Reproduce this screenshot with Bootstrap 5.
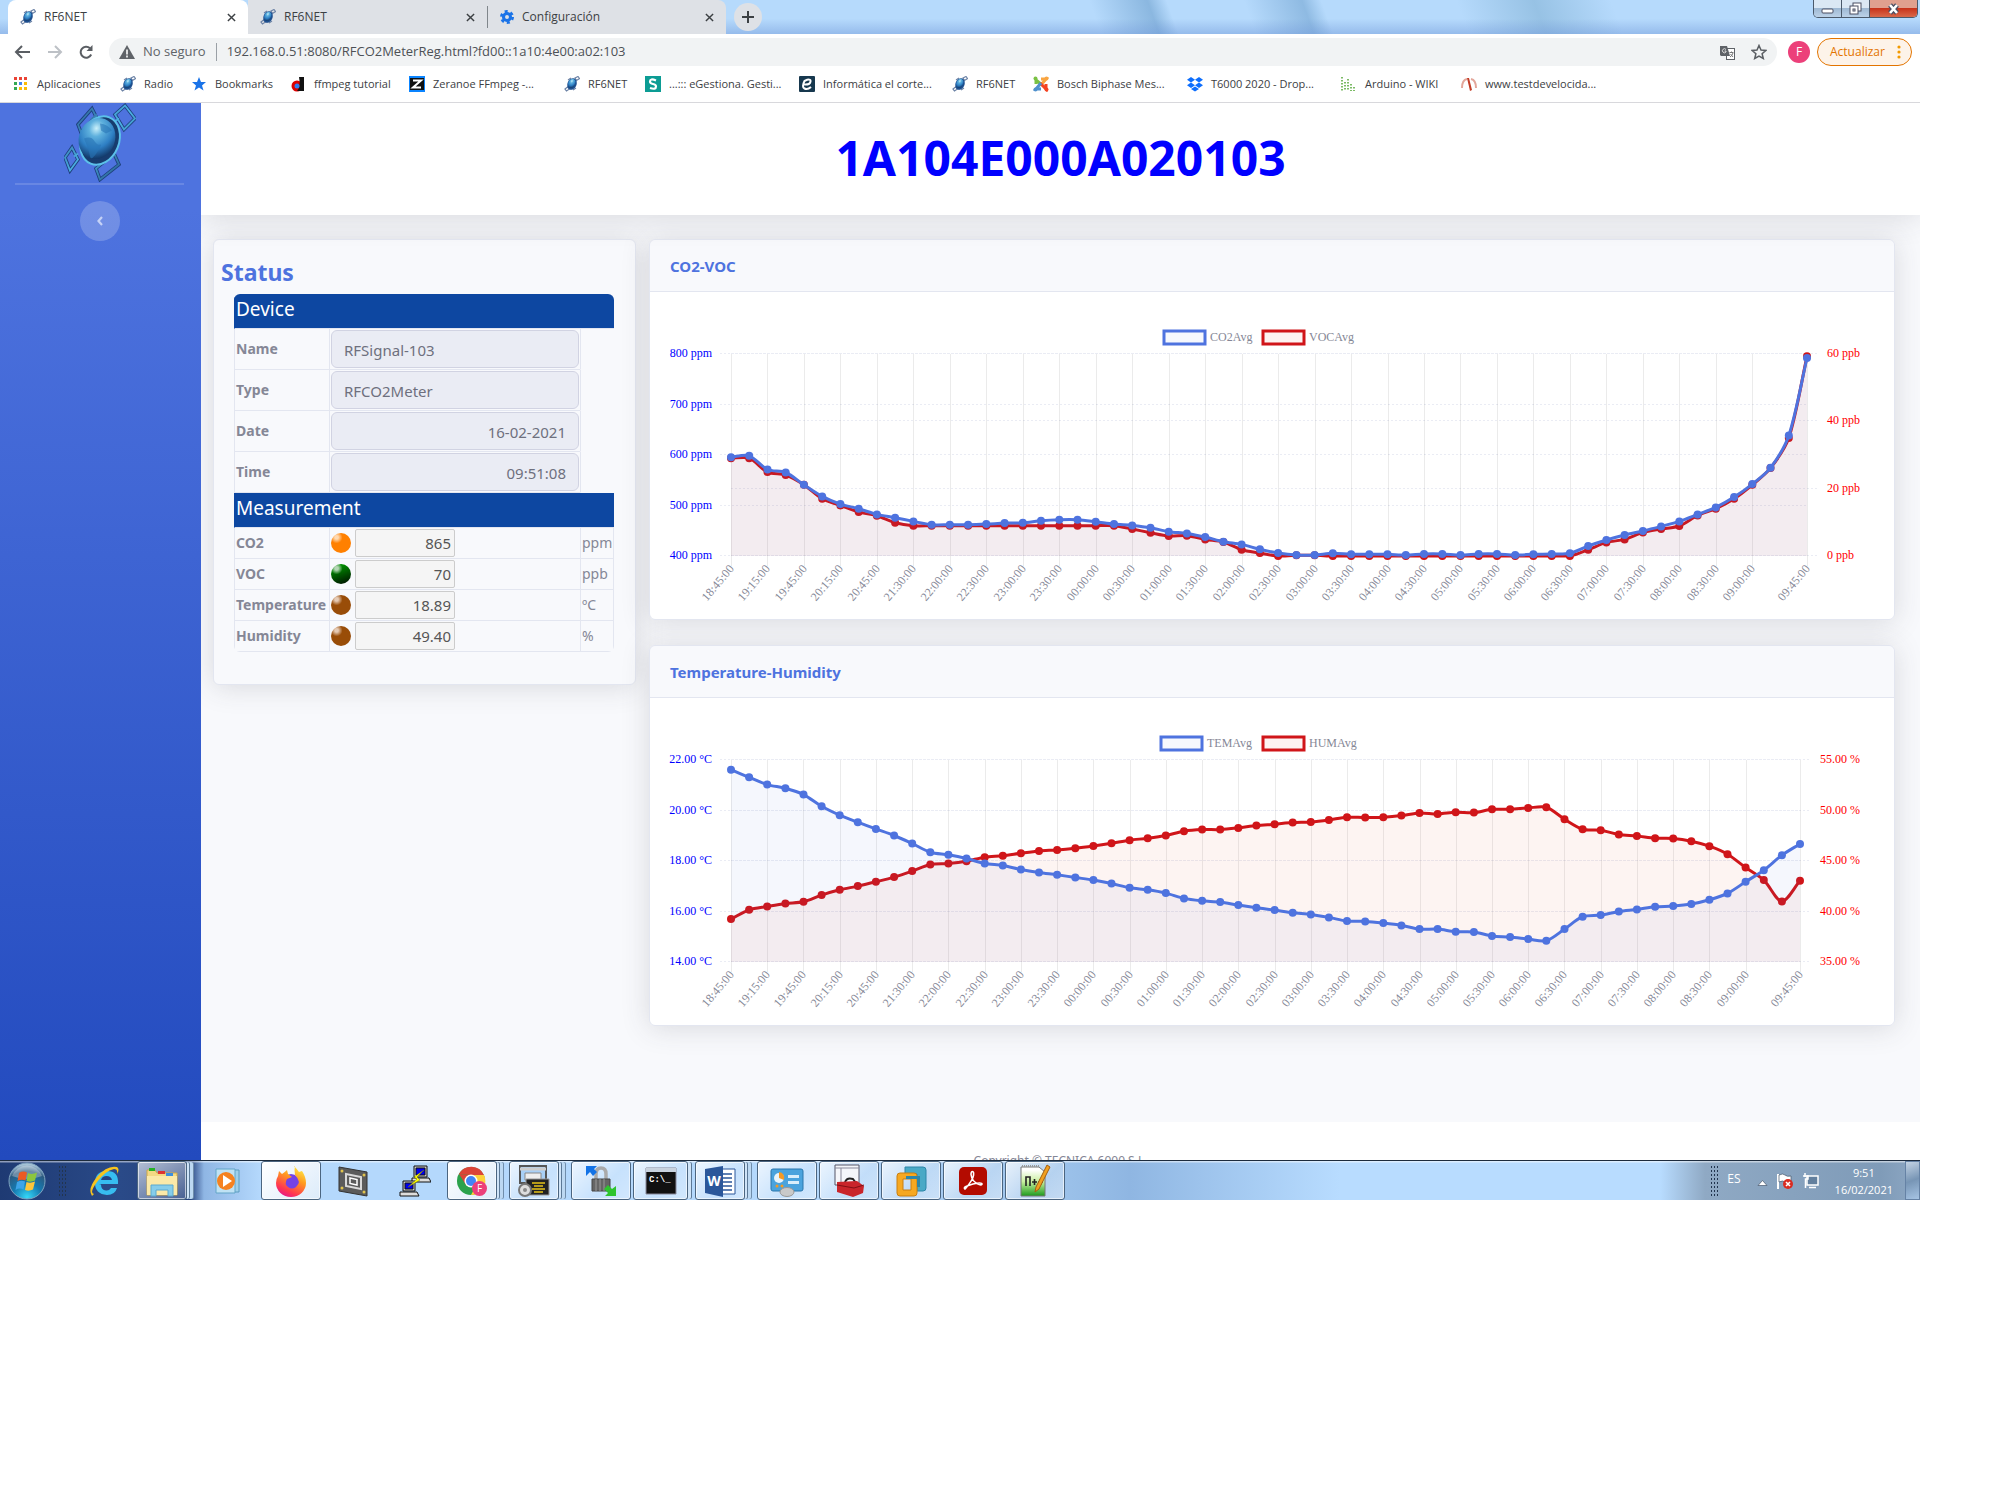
<!DOCTYPE html>
<html lang="es">
<head>
<meta charset="utf-8">
<meta name="viewport" content="width=device-width, initial-scale=1">
<title>RF6NET</title>
<link href="https://cdn.jsdelivr.net/npm/bootstrap@5.3.0/dist/css/bootstrap.min.css" rel="stylesheet">
<style>
:root{--ui:"Open Sans","Noto Sans",sans-serif;--app:"Noto Sans","Open Sans",sans-serif}
body{background:#fff;font-family:var(--app);color:#858796}
a{text-decoration:none;color:inherit}
button{border:0;background:none;padding:0;color:inherit}
.desk{width:96%;height:80vh;overflow:hidden}
/* browser chrome */
.chrome-ui{font-family:var(--ui);font-size:12px;color:#3c4043}
.strip{height:34px;padding-left:8px;background:
 linear-gradient(180deg,transparent 55%,rgba(110,150,215,.45) 100%),
 linear-gradient(70deg,transparent 57%,rgba(110,160,205,.6) 60%,transparent 61%,transparent 65%,rgba(110,160,205,.55) 68%,transparent 69%,transparent 76%,rgba(120,170,205,.5) 80%,transparent 84%),
 #b6dafc}
.tab-item{width:239px;padding:0 12px;background:#dee1e6;height:34px}
.tab-item.on{background:#fff;border-radius:8px 8px 0 0;width:240px}
.tab-item.sep{border-left:1px solid #80868b;border-image:linear-gradient(transparent 20%,#80868b 20%,#80868b 80%,transparent 80%) 1}
.tab-item.end{border-radius:0 8px 0 0}
.plus{width:28px;height:28px;border-radius:50%;background:#dee1e6;margin-left:8px}
.wbtns{height:18px;margin-right:2px;border:1px solid #4b5a6b;border-top:0;border-radius:0 0 5px 5px;overflow:hidden}
.wbtns button{width:28px;background:linear-gradient(#dbe8f4 50%,#9fb9d3 50%,#bcd2e8);border-right:1px solid #4b5a6b}
.wbtns button:last-child{width:47px;border:0;background:linear-gradient(#e0a08f 45%,#c8341c 50%,#d9694a)}
.tools{height:36px;padding:0 8px 0 14px;background:#fff}
.omni{height:28px;background:#f1f3f4;border-radius:14px;padding:0 10px;color:#5f6368;font-size:13px}
.omni input{border:0;background:none;outline:0;color:#4d5156;font-size:13px;padding:0;width:100%}
.omni .vr{height:18px;align-self:center;opacity:1;background:#9aa0a6;margin:0 10px}
.face{width:22px;height:22px;border-radius:50%;background:#ec407a;color:#fff;margin:0 7px 0 11px}
.upd{height:28px;width:95px;border:1px solid #e37400;border-radius:14px;background:#fdf3e9;color:#e37400;font-size:12px;padding:0 10px 0 12px}
.marks{height:33px;padding:0 0 4px 13px;border-bottom:1px solid #d8d8dc;display:grid;align-items:center;font-size:11px;
 grid-template-columns:107px 71px 99px 119px 155px 81px 154px 153px 81px 154px 154px 120px 150px}
.marks a{display:flex;align-items:center;gap:8px;white-space:nowrap}
.marks svg{flex:none}
/* dashboard */
.side{width:201px;padding-right:2px;background:linear-gradient(180deg,#4e73df 10%,#224abe 100%)}
.side hr{width:169px;margin:1px 0 16px;border-top:2px solid #fff;opacity:.15}
.knob{width:40px;height:40px;border-radius:50%;background:rgba(255,255,255,.2)}
.lift{box-shadow:0 2px 28px rgba(58,59,69,.17)}
.top-title{height:112px;background:#fff;position:relative;padding-bottom:2px}
.top-title h1{font-size:48px;font-weight:700;color:#00f}
.body-area{background:#f8f9fc;padding:24px 25px 0 12px;gap:13px;overflow:hidden;min-height:0}
.panel{border:1px solid #e3e6f0;border-radius:6px;overflow:visible}
.status{flex:0 0 423px;background:#f8f9fc;padding:16px 20px 32px}
.status h2{font-size:23px;line-height:32px;margin:0 0 6px -13px;font-weight:700;color:#4e73df}
.grid-t{width:380px;table-layout:fixed;border-collapse:separate;border-spacing:0;border-right:0;border-radius:6px;overflow:hidden;line-height:24px;font-size:15px}
.grid-t th,.grid-t td{padding:1px;border-bottom:1px solid #e3e6f0;border-left:1px solid #e3e6f0;vertical-align:middle;white-space:nowrap}
.grid-t th{font-size:14px}
.grid-t .unit{font-size:14px}
.grid-t .hd th{background:#0d47a1;color:#fff;font-weight:400;font-size:19px;height:35px;vertical-align:top;padding-top:3px;border-color:#0d47a1 #0d47a1 #e3e6f0}
.grid-t .tall>*{height:41px}
.grid-t .low>*{height:31px}
.grid-t .low td:last-child{border-right:1px solid #e3e6f0}
.grid-t .tall td:last-child{border-bottom-color:transparent}
.grid-t .form-control{height:38px;background:#eaecf4;border:1px solid #d1d3e2;border-radius:6px;color:#6e707e;font-size:15px;padding:2px 12px 0}
.val{width:100px;height:28px;background:#f5f5f5;border:1px solid #ccc;border-radius:2px;text-align:right;padding:0 3px;color:#555;font-size:15px}
.led{width:20px;height:20px;border-radius:50%;margin-right:4px}
.led.o{background:radial-gradient(circle at 28% 22%,#ffd9b0 0 8%,#ff8000 28%)}
.led.g{background:radial-gradient(circle at 28% 22%,#b5d6b5 0 8%,transparent 28%),linear-gradient(160deg,#008a00 20%,#001a00 90%)}
.led.b{background:radial-gradient(circle at 28% 22%,#e6cbb5 0 8%,#994d08 28%)}
.charts{gap:25px}
.charts h2{font-size:15px;line-height:18px;font-weight:700;color:#4e73df;margin:0}
.charts header{background:#f8f9fc;border-bottom:1px solid #e3e6f0;border-radius:6px 6px 0 0;padding:17px 20px 16px}
.plot{padding:20px;background:#fff;border-radius:0 0 6px 6px}
.plot svg{display:block;width:100%;overflow:visible;font-family:"Liberation Serif",serif;font-size:12px}
.foot{height:38px;background:#fff;overflow:hidden;font-size:12px;line-height:18px;padding-top:30px}
/* taskbar */
.bar{height:40px;padding-left:8px;border-top:1px solid #1c2b3d;font-family:var(--ui);
 background:linear-gradient(180deg,rgba(255,255,255,.5) 0 1px,transparent 2px),linear-gradient(90deg,#1e3a73 0,#2a4a88 120px,#27437e 190px,#8fb6e4 204px,#b4d8fc 260px,#b4d8fc 800px,#9cc2ea 1060px,#8fb6e2 1130px,#b8dcff 1340px,#b8dcff 1660px,#8fa9c4 1705px,#7f9bb8 1880px,#8ea8c4)}
.slot{width:60px;height:39px;margin-right:2px;display:flex;align-items:center;justify-content:center}
.slot.open{border:1px solid #4b6580;border-radius:3px;background:linear-gradient(135deg,rgba(255,255,255,.75),rgba(255,255,255,.25) 60%,rgba(255,255,255,.4));box-shadow:inset 0 0 0 1px rgba(255,255,255,.6)}
.slot.pile{width:50px;margin-right:12px;box-shadow:inset 0 0 0 1px rgba(255,255,255,.6),3px 0 0 -1px #cfe4f8,4px 0 0 -1px #5b7896,7px 0 0 -1px #bcd8f2,8px 0 0 -1px #6f8dab}
.slot.pair{width:55px;margin-right:7px;box-shadow:inset 0 0 0 1px rgba(255,255,255,.6),4px 0 0 -1px #cfe4f8,5px 0 0 -1px #5b7896}
.slot.lit{background:linear-gradient(135deg,#fff,#dcebfa)}
.slot.dim{background:linear-gradient(150deg,rgba(255,255,255,.65),rgba(255,255,255,.15))}
.dots{width:9px;height:32px;background:radial-gradient(circle,#22354f 1px,transparent 1px) 0 0/3px 4px}
.bar>.dots{margin:0 8px 0 12px}
.tray{color:#fff;font-size:11px;line-height:17px}
.tray .lang{font-size:12px}
.peek{width:15px;height:39px;border:1px solid #6582a5;background:linear-gradient(160deg,#c3d3e4,#7795b5 50%,#a6c4e4)}
</style>
<script src="https://cdn.jsdelivr.net/npm/bootstrap@5.3.0/dist/js/bootstrap.bundle.min.js"></script>
</head>
<body>
<svg width="0" height="0" class="position-absolute" aria-hidden="true">
 <defs>
  <radialGradient id="globe" cx=".38" cy=".28" r=".8"><stop offset="0" stop-color="#c9f0fa"/><stop offset=".25" stop-color="#5eb0dd"/><stop offset=".6" stop-color="#2e7fc4"/><stop offset="1" stop-color="#0c2a55"/></radialGradient>
  <linearGradient id="frame" x1="0" y1="0" x2="1" y2="1"><stop offset="0" stop-color="#234a80"/><stop offset=".5" stop-color="#4db3e6"/><stop offset="1" stop-color="#1b3e70"/></linearGradient>
  <linearGradient id="fire" x1=".8" y1="0" x2=".3" y2="1"><stop offset="0" stop-color="#fff04a"/><stop offset=".4" stop-color="#ff9a1f"/><stop offset=".8" stop-color="#ff3750"/><stop offset="1" stop-color="#e5178a"/></linearGradient>
  <radialGradient id="orb" cx=".5" cy=".95" r=".9"><stop offset="0" stop-color="#35d8f8"/><stop offset=".45" stop-color="#1579b0"/><stop offset=".8" stop-color="#2d5a80"/><stop offset="1" stop-color="#a5c2d6"/></radialGradient>
  <linearGradient id="npp" x1="0" y1="0" x2="0" y2="1"><stop offset=".1" stop-color="#fff"/><stop offset=".5" stop-color="#c9f0a0"/><stop offset="1" stop-color="#1c9a1c"/></linearGradient>
  <symbol id="sat" viewBox="0 0 72 78">
   <g fill="none" stroke="#1d3f7c" stroke-width="3.500"><path d="M14 21 28 5l4 8-15 16zM51 11 61 2l10 13-11 11zM1 54l7-10 6 12-8 11zM32 65l18-15 5 11-19 15z"/></g>
   <g fill="none" stroke="url(#frame)" stroke-width="1.800"><path d="M14 21 28 5l4 8-15 16zM51 11 61 2l10 13-11 11zM1 54l7-10 6 12-8 11zM32 65l18-15 5 11-19 15z"/><path d="M48 20l7-5M14 50l-4 3M40 60l3-5M27 16l6-5"/></g>
   <ellipse cx="36" cy="37" rx="19" ry="25" transform="rotate(22 36 37)" fill="#173c6e" stroke="#5cc0ea" stroke-width="2"/>
   <ellipse cx="33" cy="35" rx="18" ry="21" transform="rotate(22 33 35)" fill="url(#globe)"/>
   <path d="M20 35q7-3 10 2t6 4-3 8-7 4-2-8zM36 20q8 1 12 7l-6 3-5-3z" fill="#2874b5" opacity=".6"/>
  </symbol>
  <symbol id="satmini" viewBox="0 0 16 16"><g fill="none" stroke="#6d83a6" stroke-width="1.200"><path d="M11 2l3-1.500 1.500 2-3 2zM1 13l2.500-2 2 2-3 2zM4 4l3-2M9 14l3-2"/></g><ellipse cx="8" cy="8" rx="4.500" ry="6" transform="rotate(25 8 8)" fill="#1e4f8f"/><ellipse cx="7.500" cy="7.500" rx="3.500" ry="4.800" transform="rotate(25 8 8)" fill="url(#globe)"/></symbol>
  <symbol id="x" viewBox="0 0 10 10"><path d="M1 1l8 8M9 1 1 9" stroke="#3c4043" stroke-width="1.600"/></symbol>
 </defs>
</svg>

<div class="desk d-flex flex-column">
 <div class="chrome-ui">
  <div class="strip d-flex">
   <div class="tab-item on d-flex align-items-center"><svg width="16" height="16" class="me-2"><use href="#satmini"/></svg><a href="#">RF6NET</a><button class="ms-auto d-flex" aria-label="Cerrar"><svg width="9" height="9"><use href="#x"/></svg></button></div>
   <div class="tab-item d-flex align-items-center"><svg width="16" height="16" class="me-2"><use href="#satmini"/></svg><a href="#">RF6NET</a><button class="ms-auto d-flex" aria-label="Cerrar"><svg width="9" height="9"><use href="#x"/></svg></button></div>
   <div class="tab-item sep end d-flex align-items-center"><svg width="14" height="14" class="me-2" viewBox="0 0 16 16"><circle cx="8" cy="8" r="4" fill="none" stroke="#1a73e8" stroke-width="3.500"/><circle cx="8" cy="8" r="6.500" fill="none" stroke="#1a73e8" stroke-width="3" stroke-dasharray="3.400 3.400"/></svg><a href="#">Configuración</a><button class="ms-auto d-flex" aria-label="Cerrar"><svg width="9" height="9"><use href="#x"/></svg></button></div>
   <button class="plus d-flex align-items-center justify-content-center align-self-center" aria-label="Nueva pestaña"><svg width="12" height="12"><path d="M6 0v12M0 6h12" stroke="#3c4043" stroke-width="2"/></svg></button>
   <div class="wbtns d-flex ms-auto">
    <button class="d-flex align-items-center justify-content-center" aria-label="Minimizar"><svg width="13" height="12"><rect x="1" y="6" width="11" height="4" rx="1" fill="#fff" stroke="#4a4f63"/></svg></button>
    <button class="d-flex align-items-center justify-content-center" aria-label="Restaurar"><svg width="13" height="13"><rect x="4" y="1" width="8" height="8" fill="#fff" stroke="#4a4f63"/><rect x="1" y="4" width="8" height="8" fill="#fff" stroke="#4a4f63"/><rect x="4" y="7" width="2" height="2" fill="none" stroke="#4a4f63"/></svg></button>
    <button class="d-flex align-items-center justify-content-center" aria-label="Cerrar ventana"><svg width="13" height="12" viewBox="0 0 13 12"><path d="M3 2l7 8M10 2 3 10" stroke="#4a4f63" stroke-width="5"/><path d="M3 2l7 8M10 2 3 10" stroke="#fff" stroke-width="2.600"/></svg></button>
   </div>
  </div>
  <div class="tools d-flex align-items-center">
   <button class="d-flex me-3" aria-label="Atrás"><svg width="17" height="14"><path d="M16 7H2M8 1 2 7l6 6" fill="none" stroke="#5a5e63" stroke-width="2"/></svg></button>
   <button class="d-flex me-3" aria-label="Adelante"><svg width="16" height="14"><path d="M1 7h13M8 1l6 6-6 6" fill="none" stroke="#bdc1c6" stroke-width="2"/></svg></button>
   <button class="d-flex me-3" aria-label="Recargar"><svg width="14" height="14"><path d="M12.200 9.500A5.500 5.500 0 1 1 11 3.200" fill="none" stroke="#5a5e63" stroke-width="2"/><path d="M13.500 0v6h-6z" fill="#5a5e63"/></svg></button>
   <div class="omni d-flex align-items-center flex-grow-1">
    <svg width="16" height="14" class="me-2 flex-shrink-0"><path d="M8 0l8 14H0z" fill="#5f6368"/><path d="M8 4.500v5M8 10.500v2" stroke="#fff" stroke-width="1.600"/></svg>
    <label for="url" class="text-nowrap">No seguro</label><span class="vr flex-shrink-0"></span>
    <input id="url" value="192.168.0.51:8080/RFCO2MeterReg.html?fd00::1a10:4e00:a02:103">
    <svg width="15" height="15" class="flex-shrink-0"><rect x="6.500" y="3.500" width="8" height="11" fill="#fff" stroke="#5f6368"/><path d="M0 1h7l3 10H1l-1-1z" fill="#5f6368"/><path d="M6 4.500A2 2 0 1 0 6 7V6H4.500" fill="none" stroke="#ddd"/><path d="M9.500 7.500h4M11.500 6.500v1M13 8q-1 3-3 4M10.500 9l2.500 3" fill="none" stroke="#777"/></svg>
    <svg width="16" height="16" class="flex-shrink-0 ms-3" viewBox="0 0 16 16"><path d="M8 1.500l2 4.600 4.800.4-3.700 3.200 1.200 4.800L8 12l-4.300 2.500 1.200-4.800L1.200 6.500 6 6.100z" fill="none" stroke="#5a5e63" stroke-width="1.500"/></svg>
   </div>
   <button class="face d-flex align-items-center justify-content-center" aria-label="Perfil">F</button>
   <button class="upd d-flex align-items-center justify-content-between"><span>Actualizar</span><svg width="4" height="14"><g fill="#f29900"><circle cx="2" cy="2" r="1.600"/><circle cx="2" cy="7" r="1.600"/><circle cx="2" cy="12" r="1.600"/></g></svg></button>
  </div>
  <nav class="marks">
   <a href="#"><svg width="16" height="16"><g fill="#ea4335"><path d="M1 1h3v3H1zM6 1h3v3H6zM11 1h3v3h-3z"/></g><path d="M1 6h3v3H1zM1 11h3v3H1z" fill="#34a853"/><path d="M6 6h3v3H6z" fill="#4285f4"/><path d="M11 6h3v3h-3zM6 11h3v3H6zM11 11h3v3h-3z" fill="#fbbc05"/></svg>Aplicaciones</a>
   <a href="#"><svg width="16" height="16"><use href="#satmini"/></svg>Radio</a>
   <a href="#"><svg width="16" height="16"><path d="M8 1l2 5h5l-4 3.500 1.500 5L8 11.500l-4.500 3 1.500-5L1 6h5z" fill="#1a73e8"/></svg>Bookmarks</a>
   <a href="#"><svg width="16" height="16"><circle cx="7" cy="10" r="5.500" fill="#d00"/><path d="M9 1h5v14H7q4-4 2-14z" fill="#111"/><circle cx="7" cy="10" r="2.500" fill="#2f7df0"/></svg>ffmpeg tutorial</a>
   <a href="#"><svg width="16" height="16"><rect width="16" height="16" fill="#0a84ff"/><rect x="1" y="2" width="14" height="12" fill="#111"/><path d="M4 4.500h8l-8 7h8" fill="none" stroke="#fff" stroke-width="2"/></svg>Zeranoe FFmpeg -...</a>
   <a href="#"><svg width="16" height="16"><use href="#satmini"/></svg>RF6NET</a>
   <a href="#"><svg width="16" height="16"><rect width="16" height="16" fill="#0c9c94"/><path d="M11 4.500Q5 2 5 5.500 5 7.500 8 8t3 2.500Q11 14 5 12" fill="none" stroke="#fff" stroke-width="2.200"/></svg>...::: eGestiona. Gesti...</a>
   <a href="#"><svg width="16" height="16"><rect width="16" height="16" rx="1" fill="#17384e"/><path d="M5 8.500q6 .5 6.500-3T5.500 5Q2.500 11 5.500 12.500T12 11" fill="none" stroke="#fff" stroke-width="2"/></svg>Informática el corte...</a>
   <a href="#"><svg width="16" height="16"><use href="#satmini"/></svg>RF6NET</a>
   <a href="#"><svg width="16" height="16"><g fill="none" stroke-width="3"><path d="M3 8V4l6 5" stroke="#7ac143"/><path d="M8 3h5l-5 6" stroke="#f9a541"/><path d="M13 8v5L7 7" stroke="#f44321"/><path d="M8 13H3l5-6" stroke="#5091cd"/></g><g><circle cx="2.500" cy="2.500" r="2" fill="#7ac143"/><circle cx="13.500" cy="2.500" r="2" fill="#f9a541"/><circle cx="13.500" cy="13.500" r="2" fill="#f44321"/><circle cx="2.500" cy="13.500" r="2" fill="#5091cd"/></g></svg>Bosch Biphase Mes...</a>
   <a href="#"><svg width="16" height="16"><path d="M4 1l4 2.700-4 2.700L0 3.700zM12 1l4 2.700-4 2.700-4-2.700zM4 6.500l4 2.700-4 2.700-4-2.700zM12 6.500l4 2.700-4 2.700-4-2.700zM8 10.500l4 2.500-4 2.500L4 13z" fill="#0d6efd"/></svg>T6000 2020 - Drop...</a>
   <a href="#"><svg width="16" height="16"><g stroke="#52a535" stroke-width="1.500" stroke-dasharray="1.500 1.500"><path d="M1 1v14M4 6v9M7 3v12M10 8v7M13 11v4"/></g></svg>Arduino - WIKI</a>
   <a href="#"><svg width="16" height="16"><path d="M1 12Q1 4 6 3M15 12Q15 4 10 3" fill="none" stroke="#e3a79b" stroke-width="2"/><path d="M6 2h2l3 12-2 1z" fill="#c33c26"/></svg>www.testdevelocida...</a>
  </nav>
 </div>

 <div class="d-flex flex-grow-1 overflow-hidden">
  <aside class="side flex-shrink-0 d-flex flex-column align-items-center">
   <a href="#" aria-label="Inicio"><svg width="72" height="79" class="d-block"><use href="#sat"/></svg></a>
   <hr>
   <button class="knob d-flex align-items-center justify-content-center" aria-label="Contraer menú"><svg width="8" height="12"><path d="M6 2 2.500 6 6 10" fill="none" stroke="#c5d2f6" stroke-width="2.200"/></svg></button>
  </aside>
  <main class="flex-grow-1 d-flex flex-column overflow-hidden">
   <div class="top-title lift d-flex align-items-center justify-content-center"><h1 class="m-0">1A104E000A020103</h1></div>
   <div class="body-area d-flex align-items-start flex-grow-1">
    <section class="panel status lift">
     <h2>Status</h2>
     <table class="grid-t">
      <colgroup><col style="width:95px"><col style="width:251px"><col style="width:34px"></colgroup>
      <tbody>
      <tr class="hd"><th colspan="3">Device</th></tr>
      <tr class="tall"><th><label for="f1">Name</label></th><td><input id="f1" class="form-control" value="RFSignal-103" readonly></td><td></td></tr>
      <tr class="tall"><th><label for="f2">Type</label></th><td><input id="f2" class="form-control" value="RFCO2Meter" readonly></td><td></td></tr>
      <tr class="tall"><th><label for="f3">Date</label></th><td><input id="f3" class="form-control text-end" value="16-02-2021" readonly></td><td></td></tr>
      <tr class="tall"><th><label for="f4">Time</label></th><td><input id="f4" class="form-control text-end" value="09:51:08" readonly></td><td></td></tr>
      <tr class="hd"><th colspan="3">Measurement</th></tr>
      <tr class="low"><th><label for="m1">CO2</label></th><td><div class="d-flex align-items-center"><span class="led o"></span><input id="m1" class="val" value="865" readonly></div></td><td class="unit">ppm</td></tr>
      <tr class="low"><th><label for="m2">VOC</label></th><td><div class="d-flex align-items-center"><span class="led g"></span><input id="m2" class="val" value="70" readonly></div></td><td class="unit">ppb</td></tr>
      <tr class="low"><th><label for="m3">Temperature</label></th><td><div class="d-flex align-items-center"><span class="led b"></span><input id="m3" class="val" value="18.89" readonly></div></td><td class="unit">ºC</td></tr>
      <tr class="low"><th><label for="m4">Humidity</label></th><td><div class="d-flex align-items-center"><span class="led b"></span><input id="m4" class="val" value="49.40" readonly></div></td><td class="unit">%</td></tr>
      </tbody>
     </table>
    </section>
    <div class="charts d-flex flex-column flex-grow-1">
     <section class="panel lift"><header><h2>CO2-VOC</h2></header><div class="plot"><svg id="c1" viewBox="0 0 1204 287"></svg></div></section>
     <section class="panel lift"><header><h2>Temperature-Humidity</h2></header><div class="plot"><svg id="c2" viewBox="0 0 1204 287"></svg></div></section>
    </div>
   </div>
   <footer class="foot text-center">Copyright © TECNICA 6000 S.L.</footer>
  </main>
 </div>

 <div class="bar d-flex align-items-center">
  <button class="d-flex" aria-label="Inicio de Windows"><svg width="38" height="38" viewBox="0 0 38 38"><circle cx="19" cy="19" r="18" fill="url(#orb)" stroke="#7fa3bf"/><path d="M4 14a16 16 0 0 1 30 0q-15 6-30 0z" fill="#fff" opacity=".3"/><path d="M11 11q4-2.500 8-.5l-1.500 8q-4-1.500-8 .5z" fill="#ea5a24"/><path d="M20 11q4 2 9-.5l-2 8q-4 2-8.500.5z" fill="#8cc63e"/><path d="M9 20q4-2 8-.5l-1.500 8q-4-2-8 .5z" fill="#3da4e8"/><path d="M18.500 20q4 1.500 8.500-.5l-2 8q-4 2-8 .5z" fill="#fcc63a"/></svg></button>
  <span class="dots"></span>
  <button class="slot" aria-label="Internet Explorer"><svg width="32" height="32" viewBox="0 0 32 32"><path d="M10 19h19Q30 6 18 6T6 18q0 11 12 12 8 0 10-7h-6q-2 3-5 2.500-5-.5-5-6z" fill="#37bdf0"/><path d="M12 15q1-4 5.500-4t5.500 4z" fill="#244383"/><path d="M3 31Q-2 24 8 12T28 2q3 2 0 7 1-5-3-5Q16 6 8 17T5 29z" fill="#f7c31e"/></svg></button>
  <button class="slot open pile dim" aria-label="Explorador"><svg width="34" height="32" viewBox="0 0 34 32"><path d="M2 5h8l2 3h20v22H2z" fill="#f3d984" stroke="#cfa947"/><path d="M4 3h6v3H4z" fill="#25b125"/><path d="M13 6h7v3h-7z" fill="#d33"/><path d="M21 8h7v3h-7z" fill="#3a8ee0"/><path d="M2 11h30v19H2z" fill="#fbe9a8"/><path d="M6 31V20h22v11h-5v-6H11v6z" fill="#86cdea" stroke="#5ba9cf"/></svg></button>
  <button class="slot" aria-label="Reproductor"><svg width="30" height="28" viewBox="0 0 30 28"><path d="M8 3h17v22H8z" fill="#9fd0ea" stroke="#5d9dc0"/><path d="M2 2h19v24H2z" fill="#bfe2f4" stroke="#62a5c8"/><circle cx="12" cy="14" r="9" fill="#f58220"/><path d="M9 8l9 6-9 6z" fill="#fff"/></svg></button>
  <button class="slot open lit" aria-label="Firefox"><svg width="32" height="32" viewBox="0 0 32 32"><circle cx="16" cy="18" r="9" fill="#7542e5"/><path d="M19 1q3 3 5 6l3-1q4 6 4 12A15 14 0 0 1 1 18q0-4 2-7l1-5 3 3q3-2 5-4l1 4 4 3-5 2q-3 5 1 8t8 0q6-5-1-12-1-5 0-9z" fill="url(#fire)"/></svg></button>
  <button class="slot" aria-label="VNC"><svg width="32" height="32" viewBox="0 0 32 32"><path d="M2 2l28 5v24L2 26z" fill="#5b5b5b" stroke="#333"/><path d="M9 9l15 3v12L9 21z" fill="none" stroke="#d8d8d8" stroke-width="2"/><path d="M13 13l7 1.500v5.500l-7-1.500z" fill="none" stroke="#fff" stroke-width="1.500"/><g fill="#e0c34c"><circle cx="5" cy="6" r="1.500"/><circle cx="27" cy="10" r="1.500"/><circle cx="5" cy="23" r="1.500"/><circle cx="27" cy="27" r="1.500"/></g></svg></button>
  <button class="slot" aria-label="PuTTY"><svg width="32" height="32" viewBox="0 0 32 32"><g stroke="#111"><path d="M15 1h13v11H15z" fill="#ccc"/><path d="M17 3h9v7h-9z" fill="#00e"/><path d="M13 13h17l2 4H13z" fill="#ddd"/><path d="M4 16h12v10H4z" fill="#ccc"/><path d="M6 18h8v6H6z" fill="#00e"/><path d="M1 27h17l2 4H1z" fill="#ddd"/></g><path d="M25 5 15 12l3 2-9 8 12-7-3-3z" fill="#ff0" stroke="#770" stroke-width=".5"/></svg></button>
  <button class="slot open pile lit" aria-label="Chrome"><svg width="32" height="32" viewBox="0 0 32 32"><circle cx="15" cy="16" r="14" fill="#2ba24c"/><path d="M3 9A14 14 0 0 1 28 10H15z" fill="#db4437"/><path d="M3 9l7 11 5-10z" fill="#db4437"/><path d="M28 10A14 14 0 0 1 15 30l6-11-3-9z" fill="#fdd13a"/><circle cx="15" cy="16" r="6.500" fill="#fff"/><circle cx="15" cy="16" r="5" fill="#4285f4"/><circle cx="23.500" cy="23.500" r="7.500" fill="#ec407a"/><text x="23.500" y="27" text-anchor="middle" font-size="10" fill="#fff">F</text></svg></button>
  <button class="slot open pile" aria-label="WinSCP"><svg width="34" height="32" viewBox="0 0 34 32"><path d="M3 1h26v17H3z" fill="#a9d0f6" stroke="#555" stroke-width="2"/><path d="M3 4h26" stroke="#ccc" stroke-width="3"/><path d="M8 8h16v7H8z" fill="#eee" stroke="#888"/><path d="M9 14h23v16H9z" fill="#222" stroke="#999"/><path d="M15 18h13M17 21h9M15 24h13M17 27h9" stroke="#e8c418" stroke-width="1.500"/><circle cx="8" cy="25" r="6" fill="#ddd" stroke="#777" stroke-width="2"/><circle cx="8" cy="25" r="2" fill="#888"/></svg></button>
  <button class="slot open" aria-label="Bloqueo"><svg width="32" height="32" viewBox="0 0 32 32"><path d="M11 15V9q0-6 5-6t5 6v6" fill="none" stroke="#aaa" stroke-width="3.500"/><path d="M7 14h18v12H7z" fill="#666" stroke="#444"/><path d="M11 14v12M15 14v12M19 14v12" stroke="#999"/><path d="M1 1h11L9 4l3 3-4 4-3-4-4 4z" fill="#1373e6"/><path d="M31 31H20l3-3-4-4 4-4 4 4 4-3z" fill="#2ec42e"/></svg></button>
  <button class="slot open pair" aria-label="Consola"><svg width="32" height="28" viewBox="0 0 32 28"><path d="M1 1h30v26H1z" fill="#111" stroke="#889"/><path d="M1 1h30v4H1z" fill="#c8d2de"/><text x="4" y="15" font-size="9" font-family="Liberation Mono,monospace" font-weight="700" fill="#fff">C:\_</text></svg></button>
  <button class="slot open pile" aria-label="Word"><svg width="32" height="32" viewBox="0 0 32 32"><path d="M16 4h15v25H16z" fill="#fff" stroke="#2b579a"/><path d="M19 9h9M19 13h9M19 17h9M19 21h9M19 25h9" stroke="#2b579a" stroke-width="1.500"/><path d="M1 4l18-3v31L1 28z" fill="#2b579a"/><text x="10" y="21" text-anchor="middle" font-size="14" font-weight="700" fill="#fff">W</text></svg></button>
  <button class="slot open" aria-label="Panel de control"><svg width="34" height="32" viewBox="0 0 34 32"><rect x="1" y="4" width="32" height="22" rx="2" fill="#4aa3dd" stroke="#2b77ad"/><circle cx="9" cy="13" r="5" fill="#e8f4fc"/><path d="M9 13V7a6 6 0 0 1 5 8z" fill="#f59a23"/><path d="M18 10h11v3H18zM18 16h11v3H18z" fill="#d9eefb"/><circle cx="7" cy="21" r="1.500" fill="#f59a23"/><circle cx="12" cy="21" r="1.500" fill="#f59a23"/><ellipse cx="17" cy="27" rx="7" ry="4.500" fill="#c9c9c9" stroke="#999"/></svg></button>
  <button class="slot open" aria-label="Herramientas"><svg width="32" height="34" viewBox="0 0 32 34"><path d="M2 1h24v20H2z" fill="#f4f6fa" stroke="#556"/><path d="M2 4h24M8 4v16" stroke="#889"/><path d="M12 18q2-5 8-3l3 4" fill="none" stroke="#222" stroke-width="2"/><path d="M4 18l20-1 7 5-1 7-10 4L4 28z" fill="#c9252b"/><path d="M4 21l17 3 10-3" fill="none" stroke="#7f1014"/></svg></button>
  <button class="slot open" aria-label="VMware"><svg width="32" height="34" viewBox="0 0 32 34"><path d="M10 3h18q3 0 3 3v18q0 3-3 3h-6V10H10z" fill="#4aa9c6" stroke="#2c86a8"/><path d="M5 9h14q3 0 3 3v17q0 3-3 3H5q-3 0-3-3V12q0-3 3-3zm3 6v11h8V15z" fill="#f6a821" fill-rule="evenodd" stroke="#c97f10"/><path d="M11 12h14v11h-3V15H11z" fill="#2c86a8"/></svg></button>
  <button class="slot open" aria-label="Acrobat"><svg width="30" height="30" viewBox="0 0 30 30"><rect x="1" y="1" width="28" height="28" rx="5" fill="#b30b00"/><path d="M7 23q-3-2 8-5 9-2 9 0t-5-.5-6-9q0-3 1.500-3t1 4T8 22q-1 1-1 1z" fill="none" stroke="#fff" stroke-width="1.600"/></svg></button>
  <button class="slot open" aria-label="Notepad++"><svg width="32" height="34" viewBox="0 0 32 34"><path d="M2 3h18l6 5v24H2z" fill="url(#npp)" stroke="#777"/><path d="M3 2h18" stroke="#999" stroke-width="2" stroke-dasharray="1 1"/><path d="M7 22v-9h4v9M13 18h5M15.500 15v6M19 18h5M21.500 15v6" stroke="#222" stroke-width="1.600" fill="none"/><path d="M28 1l3 2-11 22-4 3 1-5z" fill="#f0a020" stroke="#a55f10"/></svg></button>
  <div class="tray ms-auto d-flex align-items-center gap-2">
   <span class="dots"></span><span class="lang pb-1">ES</span>
   <svg width="11" height="6" class="ms-2 mt-1"><path d="M1 5.500h9l-4.500-5z" fill="#fff" stroke="#47586b" stroke-width=".7"/></svg>
   <svg width="18" height="18"><path d="M2 2v15" stroke="#fff" stroke-width="2"/><path d="M3 3q4-2 6 0t6 1v7q-4 1-6-1t-6 0z" fill="#fff" stroke="#45566a" stroke-width=".7"/><circle cx="12" cy="12" r="5" fill="#d92b21"/><path d="M10 10l4 4M14 10l-4 4" stroke="#fff" stroke-width="1.600"/></svg>
   <svg width="17" height="17"><path d="M5 4h11v9H5z" fill="#63809e" stroke="#fff" stroke-width="1.500"/><path d="M7 15.500h7M3 1v4M1 4h5v3H3.500v9" fill="none" stroke="#fff" stroke-width="1.500"/></svg>
   <div class="text-center ms-1 ps-1 pe-1">9:51<br>16/02/2021</div>
   <button class="peek" aria-label="Mostrar escritorio"></button>
  </div>
 </div>
</div>

<script>
// Levels are heights above the x axis; FULL is the top of the scale.
const FULL = 607, TOP = 42, BASE = 244, X0 = 61;
const z = n => Array(n).fill(0), rep = (v, n) => Array(n).fill(v);
const co2 = [297,301,260,251,214,179,156,142,125,115,104,94,94,94,96,99,100,106,109,109,103,96,92,85,73,68,57,43,35,20,9,3,3,8,5,5,5,3,6,6,3,6,6,3,5,6,8,30,48,63,75,89,104,125,146,177,216,265,362,595];
const voc = [294,294,252,243,214,172,152,132,121,100,...rep(91,12),81,70,60,61,50,42,19,9,0,2,2,...z(14),19,41,50,71,81,90,122,142,172,214,264,355,600];
const tem = [578,555,533,522,503,468,441,420,400,380,356,330,322,311,296,290,278,269,262,254,246,236,223,217,207,191,184,180,171,163,156,148,143,134,123,122,117,110,99,99,91,90,78,75,69,64,99,136,141,152,158,166,168,174,187,206,241,276,321,355];
const hum = [129,157,167,176,181,201,217,228,241,255,273,293,296,303,315,319,327,334,337,342,349,357,366,372,380,393,398,398,403,410,414,419,421,427,435,434,435,440,448,445,450,449,459,459,463,465,429,399,396,383,379,372,371,363,348,324,284,246,182,244];
const times = ['18:45','19:15','19:45','20:15','20:45','21:30','22:00','22:30','23:00','23:30'];
for (let h = 0; h < 9; h++) times.push(`0${h}:00`, `0${h}:30`);
times.push('09:00');

function curve(p) {
  const t = 0.3, c = p.map((q, i) => {
    const a = p[i - 1] || q, b = p[i + 1] || q;
    const d1 = Math.hypot(q[0]-a[0], q[1]-a[1]), d2 = Math.hypot(b[0]-q[0], b[1]-q[1]), s = d1 + d2;
    const f1 = t * d1 / s, f2 = t * d2 / s, lim = v => Math.min(BASE, Math.max(TOP, v));
    return [q[0]-f1*(b[0]-a[0]), lim(q[1]-f1*(b[1]-a[1])), q[0]+f2*(b[0]-a[0]), lim(q[1]+f2*(b[1]-a[1]))];
  });
  let d = `M${p[0]}`;
  for (let i = 1; i < p.length; i++) d += `C${c[i-1][2]},${c[i-1][3]} ${c[i][0]},${c[i][1]} ${p[i]}`;
  return d;
}
function draw(id, x1, left, right, blue, red, names, lx, rx) {
  const step = (x1 - X0) / 59, X = i => X0 + i * step;
  let s = '';
  const line = (a, b, c, d, col, dash) => s += `<line x1="${a}" y1="${b}" x2="${c}" y2="${d}" stroke="${col}" ${dash ? 'stroke-dasharray="2 2"' : ''}/>`;
  const text = (x, y, t, col, more = '') => s += `<text x="${x}" y="${y}" fill="${col}" ${more}>${t}</text>`;
  left.forEach((t, i) => { const y = Math.round(TOP + i * (BASE - TOP) / (left.length - 1)) - .5; line(X0 - 11, y, x1, y, '#eaecf4', 1); text(42, y + 3, t, '#00f', 'text-anchor="end"'); });
  right.forEach((t, i) => { const y = Math.round(TOP + i * (BASE - TOP) / (right.length - 1)) - .5; line(X0, y, x1 + 10, y, '#eaecf4', 1); text(rx, y + 3, t, '#f00'); });
  [...times.map((t, i) => [t, 2 * i]), ['09:45', 59]].forEach(([t, i]) => {
    const x = Math.round(X(i)) + .5;
    line(x, TOP, x, BASE + 10, 'rgba(0,0,0,.08)');
    s += `<text transform="translate(${x + 3},${BASE + 13}) rotate(-50)" text-anchor="end" fill="#858796">${t}:00</text>`;
  });
  [[red, '#d01519', 'rgba(223,60,30,.06)'], [blue, '#4e73df', 'rgba(78,115,223,.055)']].forEach(([v, col, fill]) => {
    const p = v.map((n, i) => [+X(i).toFixed(1), +(BASE - n / FULL * (BASE - TOP)).toFixed(1)]), d = curve(p);
    s += `<path d="${d}L${x1},${BASE}L${X0},${BASE}Z" fill="${fill}"/><path d="${d}" fill="none" stroke="${col}" stroke-width="3"/>`;
    p.forEach(q => s += `<circle cx="${q[0]}" cy="${q[1]}" r="4" fill="${col}"/>`);
  });
  [[lx, '#4e73df', '#f6f8fd', names[0]], [593, '#d01519', '#fdf3f2', names[1]]].forEach(([x, col, f, n]) => {
    s += `<rect x="${x}" y="19" width="41" height="13" fill="${f}" stroke="${col}" stroke-width="3"/>`;
    text(x + 46, 29, n, '#858796');
  });
  document.getElementById(id).innerHTML = s;
}
draw('c1', 1137, ['800 ppm','700 ppm','600 ppm','500 ppm','400 ppm'], ['60 ppb','40 ppb','20 ppb','0 ppb'], co2, voc, ['CO2Avg','VOCAvg'], 494, 1157);
draw('c2', 1130, ['22.00 °C','20.00 °C','18.00 °C','16.00 °C','14.00 °C'], ['55.00 %','50.00 %','45.00 %','40.00 %','35.00 %'], tem, hum, ['TEMAvg','HUMAvg'], 491, 1150);
</script>
</body>
</html>
